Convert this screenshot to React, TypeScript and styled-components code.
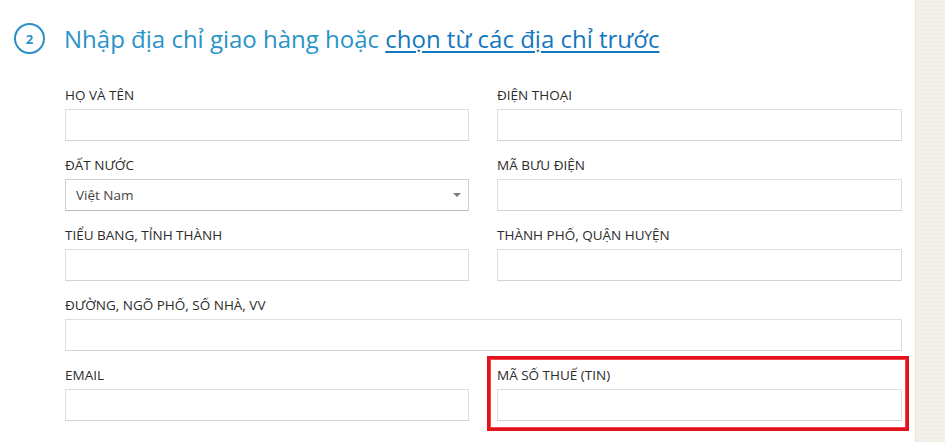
import React from "react";
import styled, { createGlobalStyle } from "styled-components";

const Global = createGlobalStyle`
  html, body { margin: 0; padding: 0; }
  body {
    background: #f3f0e9;
    font-family: "Open Sans", "Noto Sans", sans-serif;
    color: #333;
    overflow: hidden;
  }
`;

const Page = styled.div`
  display: flex;
  height: 442px;
`;

const Panel = styled.main`
  width: 915px;
  background: #fff;
  box-sizing: border-box;
  padding: 23px 13px 0 14px;
`;

const Side = styled.aside`
  flex: 1;
  border-left: 1px solid #e9e5dd;
  background-color: #f3f0e9;
  background-image: radial-gradient(rgba(0,0,0,0.02) 1px, transparent 1px);
  background-size: 4px 4px;
`;

const Header = styled.div`
  display: flex;
  align-items: center;
  height: 31px;
  gap: 19px;
  margin-bottom: 32px;
`;

const StepCircle = styled.div`
  width: 31px;
  height: 31px;
  box-sizing: border-box;
  border: 2px solid #2a8fc6;
  border-radius: 50%;
  display: flex;
  align-items: center;
  justify-content: center;
  color: #2a8fc6;
  font-weight: 700;
  font-size: 13px;
`;

const Title = styled.h2`
  margin: 0;
  font-weight: 400;
  font-size: 24px;
  color: #2a93c9;
  line-height: 31px;
  white-space: nowrap;
`;

const TitleLink = styled.a`
  color: #1478be;
  text-decoration: underline;
  text-underline-offset: 3px;
  text-decoration-thickness: 2px;
  cursor: pointer;
`;

const Form = styled.div`
  display: grid;
  grid-template-columns: 404px 405px;
  column-gap: 28px;
  row-gap: 15px;
  margin-left: 51px;
`;

const Field = styled.div<{ $wide?: boolean; $highlight?: boolean }>`
  display: flex;
  flex-direction: column;
  position: relative;
  grid-column: ${(p) => (p.$wide ? "1 / -1" : "auto")};
  ${(p) =>
    p.$highlight &&
    `
    &::after {
      content: "";
      position: absolute;
      top: -10px;
      left: -10px;
      right: -7px;
      bottom: -10px;
      border: 3px solid #e5121b;
      box-shadow: inset 0 0 0 1px #f04a50;
      pointer-events: none;
    }
  `}
`;

const Label = styled.label`
  font-size: 13.5px;
  line-height: 18px;
  text-transform: uppercase;
  color: #2b2b2b;
  margin-bottom: 5px;
`;

const Input = styled.input`
  height: 32px;
  box-sizing: border-box;
  border: 1px solid #dedede;
  border-bottom-color: #d4d4d4;
  background: #fff;
  font-family: inherit;
  font-size: 13px;
  padding: 0 10px;
  outline: none;
`;

const SelectBox = styled.div`
  height: 32px;
  box-sizing: border-box;
  border: 1px solid #cfcfcf;
  border-bottom-color: #bdbdbd;
  display: flex;
  align-items: center;
  justify-content: space-between;
  padding: 0 7px 0 10px;
  font-size: 13.5px;
  color: #444;
`;

const Caret = styled.span`
  width: 0;
  height: 0;
  border-left: 4px solid transparent;
  border-right: 4px solid transparent;
  border-top: 4px solid #7a7a7a;
`;

const fields: { label: string; wide?: boolean; select?: string; highlight?: boolean }[] = [
  { label: "Họ và tên" },
  { label: "Điện thoại" },
  { label: "Đất nước", select: "Việt Nam" },
  { label: "Mã bưu điện" },
  { label: "Tiểu bang, tỉnh thành" },
  { label: "Thành phố, quận huyện" },
  { label: "Đường, ngõ phố, số nhà, vv", wide: true },
  { label: "Email" },
  { label: "Mã số thuế (TIN)", highlight: true },
];

export default function App() {
  return (
    <>
      <Global />
      <Page>
        <Panel>
          <Header>
            <StepCircle>2</StepCircle>
            <Title>
              Nhập địa chỉ giao hàng hoặc <TitleLink>chọn từ các địa chỉ trước</TitleLink>
            </Title>
          </Header>
          <Form>
            {fields.map((f) => (
              <Field key={f.label} $wide={f.wide} $highlight={f.highlight}>
                <Label>{f.label}</Label>
                {f.select ? (
                  <SelectBox>
                    <span>{f.select}</span>
                    <Caret />
                  </SelectBox>
                ) : (
                  <Input type="text" />
                )}
              </Field>
            ))}
          </Form>
        </Panel>
        <Side />
      </Page>
    </>
  );
}
